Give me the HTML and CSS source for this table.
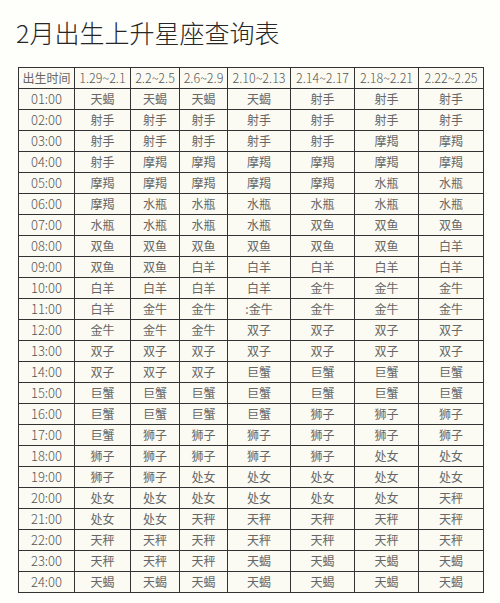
FILE: index.html
```html
<!DOCTYPE html>
<html lang="zh-CN">
<head>
<meta charset="utf-8">
<title>2月出生上升星座查询表</title>
<link rel="stylesheet" href="styles.css">
</head>
<body>
<h1 class="title">2月出生上升星座查询表</h1>
<table class="chart">
<colgroup>
<col class="c1"><col class="c2"><col class="c3"><col class="c4"><col class="c5"><col class="c6"><col class="c7"><col class="c8">
</colgroup>
<thead>
<tr><th>出生时间</th><th>1.29~2.1</th><th>2.2~2.5</th><th>2.6~2.9</th><th>2.10~2.13</th><th>2.14~2.17</th><th>2.18~2.21</th><th>2.22~2.25</th></tr>
</thead>
<tbody>
<tr><td>01:00</td><td>天蝎</td><td>天蝎</td><td>天蝎</td><td>天蝎</td><td>射手</td><td>射手</td><td>射手</td></tr>
<tr><td>02:00</td><td>射手</td><td>射手</td><td>射手</td><td>射手</td><td>射手</td><td>射手</td><td>射手</td></tr>
<tr><td>03:00</td><td>射手</td><td>射手</td><td>射手</td><td>射手</td><td>射手</td><td>摩羯</td><td>摩羯</td></tr>
<tr><td>04:00</td><td>射手</td><td>摩羯</td><td>摩羯</td><td>摩羯</td><td>摩羯</td><td>摩羯</td><td>摩羯</td></tr>
<tr><td>05:00</td><td>摩羯</td><td>摩羯</td><td>摩羯</td><td>摩羯</td><td>摩羯</td><td>水瓶</td><td>水瓶</td></tr>
<tr><td>06:00</td><td>摩羯</td><td>水瓶</td><td>水瓶</td><td>水瓶</td><td>水瓶</td><td>水瓶</td><td>水瓶</td></tr>
<tr><td>07:00</td><td>水瓶</td><td>水瓶</td><td>水瓶</td><td>水瓶</td><td>双鱼</td><td>双鱼</td><td>双鱼</td></tr>
<tr><td>08:00</td><td>双鱼</td><td>双鱼</td><td>双鱼</td><td>双鱼</td><td>双鱼</td><td>双鱼</td><td>白羊</td></tr>
<tr><td>09:00</td><td>双鱼</td><td>双鱼</td><td>白羊</td><td>白羊</td><td>白羊</td><td>白羊</td><td>白羊</td></tr>
<tr><td>10:00</td><td>白羊</td><td>白羊</td><td>白羊</td><td>白羊</td><td>金牛</td><td>金牛</td><td>金牛</td></tr>
<tr><td>11:00</td><td>白羊</td><td>金牛</td><td>金牛</td><td>:金牛</td><td>金牛</td><td>金牛</td><td>金牛</td></tr>
<tr><td>12:00</td><td>金牛</td><td>金牛</td><td>金牛</td><td>双子</td><td>双子</td><td>双子</td><td>双子</td></tr>
<tr><td>13:00</td><td>双子</td><td>双子</td><td>双子</td><td>双子</td><td>双子</td><td>双子</td><td>双子</td></tr>
<tr><td>14:00</td><td>双子</td><td>双子</td><td>双子</td><td>巨蟹</td><td>巨蟹</td><td>巨蟹</td><td>巨蟹</td></tr>
<tr><td>15:00</td><td>巨蟹</td><td>巨蟹</td><td>巨蟹</td><td>巨蟹</td><td>巨蟹</td><td>巨蟹</td><td>巨蟹</td></tr>
<tr><td>16:00</td><td>巨蟹</td><td>巨蟹</td><td>巨蟹</td><td>巨蟹</td><td>狮子</td><td>狮子</td><td>狮子</td></tr>
<tr><td>17:00</td><td>巨蟹</td><td>狮子</td><td>狮子</td><td>狮子</td><td>狮子</td><td>狮子</td><td>狮子</td></tr>
<tr><td>18:00</td><td>狮子</td><td>狮子</td><td>狮子</td><td>狮子</td><td>狮子</td><td>处女</td><td>处女</td></tr>
<tr><td>19:00</td><td>狮子</td><td>狮子</td><td>处女</td><td>处女</td><td>处女</td><td>处女</td><td>处女</td></tr>
<tr><td>20:00</td><td>处女</td><td>处女</td><td>处女</td><td>处女</td><td>处女</td><td>处女</td><td>天秤</td></tr>
<tr><td>21:00</td><td>处女</td><td>处女</td><td>天秤</td><td>天秤</td><td>天秤</td><td>天秤</td><td>天秤</td></tr>
<tr><td>22:00</td><td>天秤</td><td>天秤</td><td>天秤</td><td>天秤</td><td>天秤</td><td>天秤</td><td>天秤</td></tr>
<tr><td>23:00</td><td>天秤</td><td>天秤</td><td>天秤</td><td>天蝎</td><td>天蝎</td><td>天蝎</td><td>天蝎</td></tr>
<tr><td>24:00</td><td>天蝎</td><td>天蝎</td><td>天蝎</td><td>天蝎</td><td>天蝎</td><td>天蝎</td><td>天蝎</td></tr>
</tbody>
</table>
</body>
</html>
```

FILE: styles.css
```css
html, body {
  margin: 0;
  padding: 0;
  background: #fefefb;
}
body {
  font-family: "Noto Sans CJK SC", "Noto Sans", sans-serif;
  color: #555;
}
.title {
  margin: 0;
  padding: 17px 0 0 16px;
  height: 50px;
  font-size: 25px;
  line-height: 30px;
  font-weight: 300;
  color: #262626;
}
.chart {
  margin-left: 18px;
  border-collapse: collapse;
  table-layout: fixed;
  width: 465px;
  background: #fbfbf3;
}
.c1 { width: 56px; }
.c2 { width: 56px; }
.c3 { width: 49px; }
.c4 { width: 48px; }
.c5 { width: 63px; }
.c6 { width: 64px; }
.c7 { width: 64px; }
.c8 { width: 65px; }
.chart th, .chart td {
  border: 1px solid #333;
  height: 20px;
  padding: 0;
  text-align: center;
  font-weight: 400;
  font-size: 12px;
  line-height: 20px;
  color: #666;
  white-space: nowrap;
}
.chart td:first-child {
  font-size: 13px;
  font-weight: 300;
  color: #555;
}
.chart th:not(:first-child) {
  font-size: 12.5px;
  font-weight: 300;
  color: #555;
}
```
